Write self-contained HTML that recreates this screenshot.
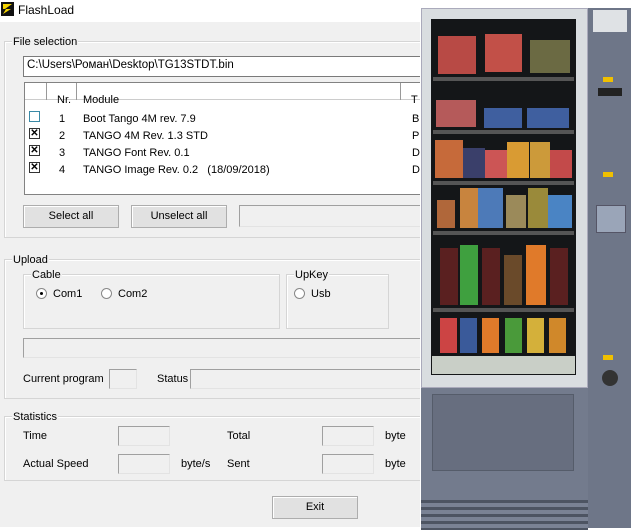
<!DOCTYPE html>
<html><head><style>
*{margin:0;padding:0;box-sizing:border-box}
body{width:631px;height:530px;position:relative;overflow:hidden;background:#fff;font-family:"Liberation Sans",Arial,sans-serif;font-size:11px;color:#000}
.a{position:absolute}
.dlg{left:0;top:22px;width:421px;height:505px;background:#f0f0f0}
.grp{position:absolute;border:1px solid #d5d5d5;box-shadow:inset 1px 1px 0 #fff}
.lbl{position:absolute;background:#f0f0f0;padding:0 1px;top:-6px;left:7px;line-height:12px}
.box{position:absolute;border:1px solid #a0a0a0;border-right-color:#e3e3e3;border-bottom-color:#e3e3e3;background:#f0f0f0}
.btn{position:absolute;border:1px solid #adadad;background:#e1e1e1;text-align:center;line-height:20px;box-shadow:inset 1px 1px 0 #fff}
.cb{position:absolute;width:11px;height:11px;border:1px solid #333;background:#fff;font-size:10px;line-height:9px;text-align:center;font-weight:bold}
.rd{position:absolute;width:11px;height:11px;border-radius:50%;border:1px solid #888;background:#fff}
</style></head><body>
<svg class="a" style="left:1px;top:2px" width="13" height="14"><rect width="13" height="14" fill="#111"/><path d="M2 2h9L4 7h6L2 12l3-5H2z" fill="#f5d400"/></svg>
<div class="a" style="left:18px;top:3px;font-size:12px">FlashLoad</div>
<div class="a dlg"></div>
<div class="grp" style="left:4px;top:41px;width:430px;height:197px"><div class="lbl">File selection</div></div>
<div class="a" style="left:23px;top:56px;width:400px;height:21px;background:#fff;border:1px solid #7a7a7a;padding:2px 3px;font-size:11.5px">C:\Users\Роман\Desktop\TG13STDT.bin</div>
<div class="a" style="left:24px;top:82px;width:400px;height:113px;background:#fff;border:1px solid #828282"></div>
<div class="a" style="left:25px;top:83px;width:400px;height:17px;background:#fff;border-bottom:1px solid #ccc"></div>
<div class="a" style="left:46px;top:83px;width:1px;height:17px;background:#999"></div>
<div class="a" style="left:76px;top:83px;width:1px;height:17px;background:#999"></div>
<div class="a" style="left:400px;top:83px;width:1px;height:17px;background:#999"></div>
<div class="a" style="left:57px;top:94px;line-height:12px">Nr.</div>
<div class="a" style="left:83px;top:94px;line-height:12px">Module</div>
<div class="a" style="left:411px;top:94px;line-height:12px">T</div>
<div class="cb" style="left:29px;top:111px;border-color:#3a89a6"></div>
<div class="cb" style="left:29px;top:128px">✕</div>
<div class="cb" style="left:29px;top:145px">✕</div>
<div class="cb" style="left:29px;top:162px">✕</div>
<div class="a" style="left:59px;top:111px;line-height:17px">1<br>2<br>3<br>4</div>
<div class="a" style="left:83px;top:111px;line-height:17px;white-space:pre">Boot Tango 4M rev. 7.9
TANGO 4M Rev. 1.3 STD
TANGO Font Rev. 0.1
TANGO Image Rev. 0.2   (18/09/2018)</div>
<div class="a" style="left:412px;top:111px;line-height:17px">B<br>Pr<br>D<br>D</div>
<div class="btn" style="left:23px;top:205px;width:96px;height:23px">Select all</div>
<div class="btn" style="left:131px;top:205px;width:96px;height:23px">Unselect all</div>
<div class="box" style="left:239px;top:205px;width:190px;height:22px"></div>
<div class="grp" style="left:4px;top:259px;width:430px;height:140px"><div class="lbl">Upload</div></div>
<div class="grp" style="left:23px;top:274px;width:257px;height:55px"><div class="lbl">Cable</div></div>
<div class="grp" style="left:286px;top:274px;width:103px;height:55px"><div class="lbl">UpKey</div></div>
<div class="rd" style="left:36px;top:288px"><div class="a" style="left:3px;top:3px;width:3px;height:3px;background:#000;border-radius:50%"></div></div>
<div class="a" style="left:53px;top:288px">Com1</div>
<div class="rd" style="left:101px;top:288px"></div>
<div class="a" style="left:118px;top:288px">Com2</div>
<div class="rd" style="left:294px;top:288px"></div>
<div class="a" style="left:311px;top:288px">Usb</div>
<div class="box" style="left:23px;top:338px;width:410px;height:20px"></div>
<div class="a" style="left:23px;top:373px">Current program</div>
<div class="box" style="left:109px;top:369px;width:28px;height:20px"></div>
<div class="a" style="left:157px;top:373px">Status</div>
<div class="box" style="left:190px;top:369px;width:240px;height:20px"></div>
<div class="grp" style="left:4px;top:416px;width:430px;height:65px"><div class="lbl">Statistics</div></div>
<div class="a" style="left:23px;top:430px">Time</div>
<div class="box" style="left:118px;top:426px;width:52px;height:20px"></div>
<div class="a" style="left:227px;top:430px">Total</div>
<div class="box" style="left:322px;top:426px;width:52px;height:20px"></div>
<div class="a" style="left:385px;top:430px">byte</div>
<div class="a" style="left:23px;top:458px">Actual Speed</div>
<div class="box" style="left:118px;top:454px;width:52px;height:20px"></div>
<div class="a" style="left:181px;top:458px">byte/s</div>
<div class="a" style="left:227px;top:458px">Sent</div>
<div class="box" style="left:322px;top:454px;width:52px;height:20px"></div>
<div class="a" style="left:385px;top:458px">byte</div>
<div class="btn" style="left:272px;top:496px;width:86px;height:23px">Exit</div>
<div class="a" style="left:420px;top:0;width:211px;height:530px;background:#fff"></div>
<div class="a" style="left:421px;top:8px;width:167px;height:380px;background:#d9dde0;border:1px solid #aab"></div>
<div class="a" style="left:431px;top:19px;width:145px;height:356px;background:#141618"></div>
<div class="a" style="left:432px;top:356px;width:143px;height:18px;background:#c9cfc7"></div>
<div class="a" style="left:433px;top:77px;width:141px;height:4px;background:#555"></div>
<div class="a" style="left:433px;top:130px;width:141px;height:4px;background:#555"></div>
<div class="a" style="left:433px;top:181px;width:141px;height:4px;background:#555"></div>
<div class="a" style="left:433px;top:231px;width:141px;height:4px;background:#555"></div>
<div class="a" style="left:433px;top:308px;width:141px;height:4px;background:#555"></div>
<div class="a" style="left:438px;top:36px;width:38px;height:38px;background:#b84a45"></div>
<div class="a" style="left:485px;top:34px;width:37px;height:38px;background:#c25048"></div>
<div class="a" style="left:530px;top:40px;width:40px;height:33px;background:#6b6a43"></div>
<div class="a" style="left:436px;top:100px;width:40px;height:27px;background:#b55a5a"></div>
<div class="a" style="left:484px;top:108px;width:38px;height:20px;background:#3f5f9f"></div>
<div class="a" style="left:527px;top:108px;width:42px;height:20px;background:#3f5f9f"></div>
<div class="a" style="left:435px;top:140px;width:28px;height:38px;background:#c66a3a"></div>
<div class="a" style="left:463px;top:148px;width:22px;height:30px;background:#3a3f6a"></div>
<div class="a" style="left:485px;top:150px;width:22px;height:28px;background:#c55"></div>
<div class="a" style="left:507px;top:142px;width:22px;height:36px;background:#d99b33"></div>
<div class="a" style="left:530px;top:142px;width:20px;height:36px;background:#cc9a3a"></div>
<div class="a" style="left:550px;top:150px;width:22px;height:28px;background:#c34a4a"></div>
<div class="a" style="left:437px;top:200px;width:18px;height:28px;background:#b0673a"></div>
<div class="a" style="left:460px;top:188px;width:18px;height:40px;background:#c8843e"></div>
<div class="a" style="left:478px;top:188px;width:25px;height:40px;background:#4d7ab8"></div>
<div class="a" style="left:506px;top:195px;width:20px;height:33px;background:#9b8a5a"></div>
<div class="a" style="left:528px;top:188px;width:20px;height:40px;background:#9a8a3a"></div>
<div class="a" style="left:548px;top:195px;width:24px;height:33px;background:#4a84c4"></div>
<div class="a" style="left:440px;top:248px;width:18px;height:57px;background:#5a2020"></div>
<div class="a" style="left:460px;top:245px;width:18px;height:60px;background:#3fa03f"></div>
<div class="a" style="left:482px;top:248px;width:18px;height:57px;background:#5a2020"></div>
<div class="a" style="left:504px;top:255px;width:18px;height:50px;background:#6a4a2a"></div>
<div class="a" style="left:526px;top:245px;width:20px;height:60px;background:#e07a2a"></div>
<div class="a" style="left:550px;top:248px;width:18px;height:57px;background:#5a2020"></div>
<div class="a" style="left:440px;top:318px;width:17px;height:35px;background:#c44"></div>
<div class="a" style="left:460px;top:318px;width:17px;height:35px;background:#3a5a9a"></div>
<div class="a" style="left:482px;top:318px;width:17px;height:35px;background:#e07a2a"></div>
<div class="a" style="left:505px;top:318px;width:17px;height:35px;background:#4a9a3a"></div>
<div class="a" style="left:527px;top:318px;width:17px;height:35px;background:#d4b03a"></div>
<div class="a" style="left:549px;top:318px;width:17px;height:35px;background:#d0882a"></div>
<div class="a" style="left:588px;top:8px;width:43px;height:520px;background:#6e7688"></div>
<div class="a" style="left:593px;top:10px;width:34px;height:22px;background:#dfe2e5"></div>
<div class="a" style="left:598px;top:88px;width:24px;height:8px;background:#222"></div>
<div class="a" style="left:596px;top:205px;width:30px;height:28px;background:#9aa5b8;border:1px solid #556"></div>
<div class="a" style="left:602px;top:370px;width:16px;height:16px;border-radius:50%;background:#333"></div>
<div class="a" style="left:603px;top:77px;width:10px;height:5px;background:#f0c000"></div>
<div class="a" style="left:603px;top:172px;width:10px;height:5px;background:#f0c000"></div>
<div class="a" style="left:603px;top:355px;width:10px;height:5px;background:#f0c000"></div>
<div class="a" style="left:421px;top:388px;width:167px;height:142px;background:#737b8d"></div>
<div class="a" style="left:432px;top:394px;width:142px;height:77px;background:#676e7f;border:1px solid #555c6a"></div>
<div class="a" style="left:421px;top:500px;width:167px;height:30px;background:repeating-linear-gradient(#4d5462 0 3px,#7a8294 3px 7px)"></div>
</body></html>
